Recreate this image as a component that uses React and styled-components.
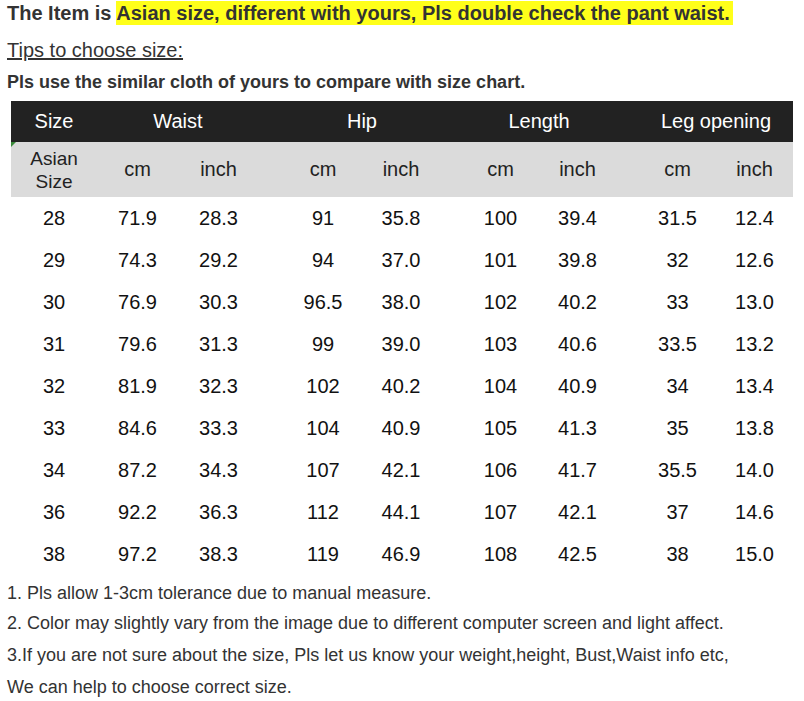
import React from 'react';
import styled, { createGlobalStyle } from 'styled-components';

const Global = createGlobalStyle`
  body {
    margin: 0;
    background: #fff;
    font-family: "Liberation Sans", Arial, sans-serif;
    color: #333;
  }
`;

const rows = [
  ['28', '71.9', '28.3', '91', '35.8', '100', '39.4', '31.5', '12.4'],
  ['29', '74.3', '29.2', '94', '37.0', '101', '39.8', '32', '12.6'],
  ['30', '76.9', '30.3', '96.5', '38.0', '102', '40.2', '33', '13.0'],
  ['31', '79.6', '31.3', '99', '39.0', '103', '40.6', '33.5', '13.2'],
  ['32', '81.9', '32.3', '102', '40.2', '104', '40.9', '34', '13.4'],
  ['33', '84.6', '33.3', '104', '40.9', '105', '41.3', '35', '13.8'],
  ['34', '87.2', '34.3', '107', '42.1', '106', '41.7', '35.5', '14.0'],
  ['36', '92.2', '36.3', '112', '44.1', '107', '42.1', '37', '14.6'],
  ['38', '97.2', '38.3', '119', '46.9', '108', '42.5', '38', '15.0'],
];

// grid line where each value column starts (spacer tracks sit between groups)
const colStart = [1, 2, 3, 5, 6, 8, 9, 11, 12];

const groups = [
  { label: 'Waist', start: 2 },
  { label: 'Hip', start: 5 },
  { label: 'Length', start: 8 },
  { label: 'Leg opening', start: 11 },
];

const Page = styled.div`
  width: 804px;
  padding: 0 0 0 7px;
  box-sizing: border-box;
`;

const Title = styled.div`
  font-size: 20px;
  font-weight: bold;
  line-height: 24px;
  padding-top: 1px;
  color: #333;
`;

const Mark = styled.span`
  background: #ffff1a;
  padding: 1px 3px 1px 0;
`;

const Tips = styled.div`
  margin-top: 13px;
  font-size: 20px;
  line-height: 24px;
  text-decoration: underline;
  color: #333;
`;

const Note = styled.div`
  margin-top: 9px;
  font-size: 18px;
  font-weight: bold;
  line-height: 22px;
  color: #333;
`;

const Table = styled.div`
  margin: 8px 0 0 4px;
  width: 782px;
  position: relative;
`;

const Row = styled.div`
  display: grid;
  grid-template-columns: 86px 81px 81px 25px 78px 78px 22px 77px 77px 23px 77px 77px;
  height: ${p => p.h}px;
  background: ${p => p.bg || 'transparent'};
  color: ${p => p.fg || '#111'};
`;

const Cell = styled.div`
  grid-column: ${p => p.col} / span ${p => p.span || 1};
  display: flex;
  align-items: center;
  justify-content: center;
  text-align: center;
  font-size: ${p => p.size || 20}px;
  line-height: 23px;
`;

const Corner = styled.span`
  position: absolute;
  left: 0;
  top: 41px;
  width: 0;
  height: 0;
  border-top: 5px solid #3a8a3a;
  border-right: 5px solid transparent;
`;

const Footer = styled.div`
  margin-top: 3px;
  font-size: 18px;
  color: #333;
`;

const FootLine = styled.div`
  line-height: ${p => p.h}px;
`;

export default function App() {
  return (
    <Page>
      <Global />
      <Title>
        The Item is <Mark>Asian size, different with yours, Pls double check the pant waist.</Mark>
      </Title>
      <Tips>Tips to choose size:</Tips>
      <Note>Pls use the similar cloth of yours to compare with size chart.</Note>
      <Table>
        <Corner />
        <Row h={41} bg="#222" fg="#fff">
          <Cell col={1}>Size</Cell>
          {groups.map(g => (
            <Cell key={g.label} col={g.start} span={2}>{g.label}</Cell>
          ))}
        </Row>
        <Row h={55} bg="#dbdbdb" fg="#222">
          <Cell col={1} size={19}>Asian<br />Size</Cell>
          {groups.map(g => (
            <React.Fragment key={g.label}>
              <Cell col={g.start}>cm</Cell>
              <Cell col={g.start + 1}>inch</Cell>
            </React.Fragment>
          ))}
        </Row>
        {rows.map(r => (
          <Row key={r[0]} h={42}>
            {r.map((v, i) => (
              <Cell key={i} col={colStart[i]}>{v}</Cell>
            ))}
          </Row>
        ))}
      </Table>
      <Footer>
        <FootLine h={30}>1. Pls allow 1-3cm tolerance due to manual measure.</FootLine>
        <FootLine h={31}>2. Color may slightly vary from the image due to different computer screen and light affect.</FootLine>
        <FootLine h={32}>3.If you are not sure about the size, Pls let us know your weight,height, Bust,Waist info etc,</FootLine>
        <FootLine h={32}>We can help to choose correct size.</FootLine>
      </Footer>
    </Page>
  );
}
